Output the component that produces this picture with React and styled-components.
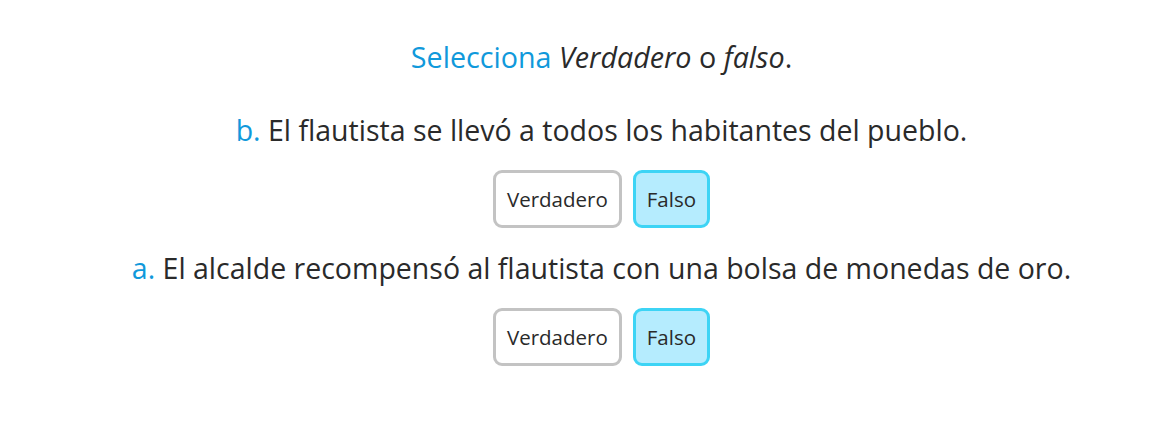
import React, { useState } from "react";
import styled, { createGlobalStyle } from "styled-components";

const GlobalStyle = createGlobalStyle`
  body {
    margin: 0;
    background: #ffffff;
    font-family: "Open Sans", "Noto Sans", sans-serif;
    color: #2a2a2a;
  }
`;

const Page = styled.div`
  width: 1162px;
  height: 437px;
  display: flex;
  flex-direction: column;
  align-items: center;
  padding: 39px 0 0 41px;
  box-sizing: border-box;
`;

const Title = styled.div`
  font-size: 28.7px;
  line-height: 36px;
  margin-bottom: 37px;
`;

const Blue = styled.span`
  color: #1099db;
`;

const Question = styled.div`
  font-size: 28.5px;
  line-height: 36px;
  margin-bottom: 22px;
`;

const Options = styled.div`
  display: flex;
  gap: 11px;
  margin-bottom: 22px;
`;

const Option = styled.button`
  height: 58px;
  padding: 0 11px;
  box-sizing: border-box;
  border-radius: 9px;
  border: 3px solid ${(p) => (p.$selected ? "#3dd4f5" : "#c3c3c3")};
  background: ${(p) => (p.$selected ? "#b5ecfe" : "#ffffff")};
  font-family: inherit;
  font-size: 20.5px;
  color: #2a2a2a;
  cursor: pointer;
`;

const questions = [
  { letter: "b.", text: "El flautista se llevó a todos los habitantes del pueblo." },
  { letter: "a.", text: "El alcalde recompensó al flautista con una bolsa de monedas de oro." },
];

export default function App() {
  const [answers, setAnswers] = useState(["Falso", "Falso"]);

  return (
    <>
      <GlobalStyle />
      <Page>
        <Title>
          <Blue>Selecciona</Blue> <i>Verdadero</i> o <i>falso</i>.
        </Title>
        {questions.map((q, i) => (
          <React.Fragment key={q.letter}>
            <Question>
              <Blue>{q.letter}</Blue> {q.text}
            </Question>
            <Options>
              {["Verdadero", "Falso"].map((opt) => (
                <Option
                  key={opt}
                  $selected={answers[i] === opt}
                  onClick={() => setAnswers((a) => a.map((v, j) => (j === i ? opt : v)))}
                >
                  {opt}
                </Option>
              ))}
            </Options>
          </React.Fragment>
        ))}
      </Page>
    </>
  );
}
